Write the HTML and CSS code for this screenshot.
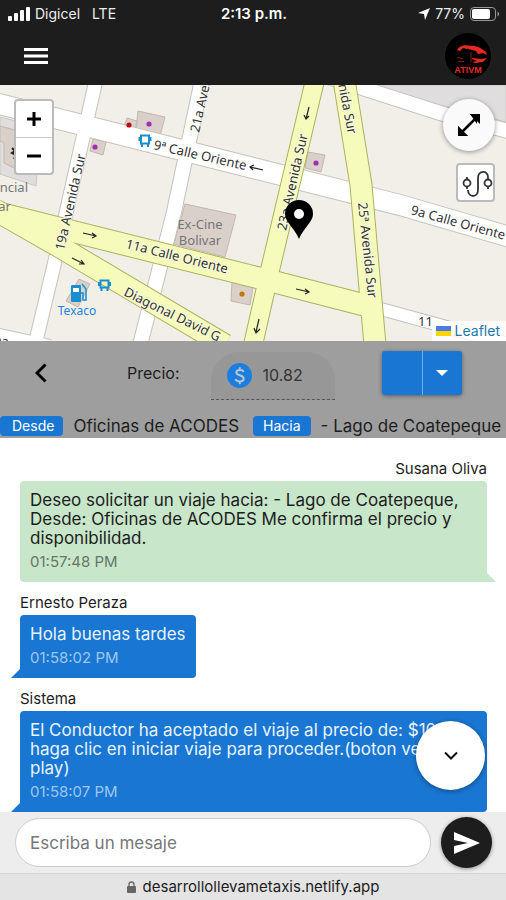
FILE: index.html
```html
<!DOCTYPE html>
<html lang="es">
<head>
<meta charset="utf-8">
<meta name="viewport" content="width=device-width, initial-scale=1">
<title>Lleva Me Taxis</title>
<link rel="stylesheet" href="styles.css">
</head>
<body>
<div class="app">
  <header class="header">
    <div class="status">
      <div class="status-side">
        <svg class="signal" viewBox="0 0 23 14" aria-hidden="true"><g fill="#fff"><rect x="0" y="9" width="4" height="5" rx="1"/><rect x="6" y="6" width="4" height="8" rx="1"/><rect x="12" y="3" width="4" height="11" rx="1"/><rect x="18" y="0" width="4" height="14" rx="1"/></g></svg>
        <span>Digicel</span><span class="network">LTE</span>
      </div>
      <strong class="clock">2:13 p.m.</strong>
      <div class="status-side status-end">
        <svg class="arrow" viewBox="0 0 12 12" aria-hidden="true"><path d="M12 0 7 12 6 6 0 5z" fill="#fff"/></svg>
        <span>77%</span>
        <svg class="battery" viewBox="0 0 30 14" aria-hidden="true"><rect x=".5" y=".5" width="25" height="13" rx="3.5" fill="none" stroke="#999"/><rect x="2" y="2" width="18" height="10" rx="2" fill="#fff"/><path d="M27.500 4.500c2 .8 2 4.200 0 5z" fill="#999"/></svg>
      </div>
    </div>
    <div class="toolbar">
      <button class="menu" aria-label="Menú"><svg viewBox="0 0 24 18" aria-hidden="true"><path d="M0 2.500h24M0 9h24M0 15.500h24" stroke="#fff" stroke-width="3"/></svg></button>
      <svg class="logo" viewBox="0 0 46 46" role="img" aria-label="ATIVM"><circle cx="23" cy="23" r="23" fill="#000"/><g fill="#e52a23"><path d="M12 17c2-4 8-6 14-4l-4 3-4-1-3 3z"/><path d="M24 13c7-1 12 2 17 6l1 3-4-2-5 1-2-3-8-2z"/><path d="M27 25l9 1 6-1-4 4-8 1-3-1 5-1-5-2z"/><path d="M12 24l6 1v1l-6-1zM13 28h6v1h-6z" opacity=".6"/><path d="M26 19v10" stroke="#8e1612" stroke-width="1"/></g><text x="23" y="40" text-anchor="middle" class="logo-text">ATIVM</text></svg>
    </div>
  </header>

  <section class="map" aria-label="Mapa">
    <svg class="map-canvas" viewBox="0 85 506 256" preserveAspectRatio="xMidYMid slice">
      <rect y="85" width="506" height="256" fill="#f2efe9"/>
      <g fill="#dfdddd" stroke="#ccc8c4">
        <path d="M374 85H506V122L440 105z"/>
        <path d="M0 117 40 127 36 186 0 174z"/>
      </g>
      <g fill="#d9d0c9" stroke="#c4b7ad">
        <path d="M0 126 18 131 14 168 4 163 4 143 0 141z"/>
        <path d="M138 111 165 117 160 136 136 131z"/><path d="M127 118 137 121 135 130 124 127z"/>
        <path d="M93 139 106 142 103 155 90 151z"/><path d="M308 152 325 155 321 172 305 168z"/>
        <path d="M185 204 236 215 225 257 174 244z"/><path d="M232 282 253 287 250 305 231 301z"/>
        <path d="M79 279 90 284 78 307 66 301z"/>
      </g>
      <g fill="none" stroke="#c6c3be">
        <path d="M96 80 60 240 35 345" stroke-width="15"/><path d="M202 80 174 212 140 345" stroke-width="16"/>
        <path d="M-5 103 253 168 400 205 510 237" stroke-width="22"/><path d="M325 76 440 113 512 132" stroke-width="16"/>
        <path d="M370 306 512 345" stroke-width="14"/><path d="M-5 336 50 348" stroke-width="18"/>
      </g>
      <g fill="none" stroke="#fff">
        <path d="M96 80 60 240 35 345" stroke-width="13"/><path d="M202 80 174 212 140 345" stroke-width="14"/>
        <path d="M-5 103 253 168 400 205 510 237" stroke-width="20"/><path d="M325 76 440 113 512 132" stroke-width="14"/>
        <path d="M370 306 512 345" stroke-width="12"/><path d="M-5 336 50 348" stroke-width="16"/>
      </g>
      <g fill="none" stroke="#acb35c">
        <path d="M315 80 270 270 253 345" stroke-width="20"/><path d="M344 80 361 185 371 300 375 345" stroke-width="23"/>
        <path d="M-5 212 275 282 372 307" stroke-width="23"/><path d="M-5 210 60 247 225 345" stroke-width="23"/>
      </g>
      <g fill="none" stroke="#f6fabb">
        <path d="M315 80 270 270 253 345" stroke-width="18"/><path d="M344 80 361 185 371 300 375 345" stroke-width="21"/>
        <path d="M-5 212 275 282 372 307" stroke-width="21"/><path d="M-5 210 60 247 225 345" stroke-width="21"/>
      </g>
      <g fill="#a32cb5"><circle cx="149" cy="124" r="2.600"/><circle cx="95" cy="147" r="2.600"/><circle cx="316" cy="163" r="2.600"/></g>
      <circle cx="129" cy="125" r="2.600" fill="#c40a10"/><circle cx="242" cy="294" r="2.600" fill="#c77400"/>
      <path d="M12 148l3 3-3 2 4 2-2 4" fill="none" stroke="#222" stroke-width="2"/>
      <g fill="none" stroke="#222" stroke-width="1.200">
        <path d="M263 170 250 167M254 165l-4 2 3 3"/><path d="M83 233l13 3M92 233l4 3-4 2"/><path d="M72 258l12 6M81 260l3 4-5 0"/>
        <path d="M296 289l13 3M305 289l4 3-4 2"/><path d="M259 319l-3 13M254 328l2 5 4-4"/><path d="M309 107l-3 12M304 115l2 4 3-3"/>
      </g>
      <g fill="none" stroke="#168fd1" stroke-width="2"><rect x="141" y="135.500" width="8" height="8"/><path d="M139.500 137v4M150.500 137v4M142 144v3M148 144v3"/></g>
      <g fill="none" stroke="#168fd1" stroke-width="2"><rect x="100.500" y="280.500" width="8" height="7"/><path d="M99 282v4M110 282v4M101.500 288v3M107.500 288v3"/></g>
      <g fill="#168fd1"><rect x="71" y="285" width="10" height="17" rx="1"/><path d="M82 284l4 5v11h-3v-7h-2" fill="none" stroke="#168fd1" stroke-width="1.500"/><rect x="73" y="288" width="6" height="4" fill="#fff"/></g>
      <defs>
        <path id="r9" d="M153 149 262 174"/><path id="r9b" d="M410 214 530 247"/><path id="r11" d="M125 248 245 278"/>
        <path id="r19" d="M64 251 89 140"/><path id="r21" d="M199 133 217 55"/><path id="r23" d="M286 231 311 120"/>
        <path id="r25" d="M358 203 370 315"/><path id="r25b" d="M334 63 350 145"/><path id="rd" d="M123 295 257 361"/>
      </defs>
      <g class="street">
        <text><textPath href="#r9">9ª Calle Oriente</textPath></text><text><textPath href="#r9b">9a Calle Oriente</textPath></text>
        <text><textPath href="#r11">11a Calle Oriente</textPath></text><text><textPath href="#r19">19a Avenida Sur</textPath></text>
        <text><textPath href="#r21">21a Avenida</textPath></text><text><textPath href="#r23">23a Avenida Sur</textPath></text>
        <text><textPath href="#r25">25ª Avenida Sur</textPath></text><text><textPath href="#r25b">Avenida Sur</textPath></text>
        <text><textPath href="#rd">Diagonal David G</textPath></text>
        <text x="418" y="326">11</text><text x="-6" y="346">9a</text>
      </g>
      <g class="place"><text x="200" y="229" text-anchor="middle">Ex-Cine</text><text x="200" y="245" text-anchor="middle">Bolivar</text><text x="28" y="192" text-anchor="end">ncial</text><text x="11" y="211" text-anchor="end">ar</text></g>
      <text x="77" y="315" text-anchor="middle" class="brand">Texaco</text>
      <path d="M299 239C294 227 285 222 285 214a14 14 0 0 1 28 0c0 8-9 13-14 25z"/><circle cx="299" cy="214" r="5" fill="#fff"/>
    </svg>
    <div class="zoom"><button aria-label="Acercar"><svg viewBox="0 0 16 16"><path d="M8 1v14M1 8h14"/></svg></button><button aria-label="Alejar"><svg viewBox="0 0 16 16"><path d="M1 8h14"/></svg></button></div>
    <div class="map-tools">
      <button class="expand" aria-label="Ampliar mapa"><svg viewBox="0 0 24 24"><path d="M5 19 19 5" stroke="#000" stroke-width="2.500"/><path d="M13 1h10L20 4v7zM1 13v10h10z"/><path d="M13 1h10v10zM1 13v10h10z"/></svg></button>
      <button class="route" aria-label="Ruta"><svg viewBox="2 2 35 35" fill="none" stroke="#333" stroke-width="1.800"><circle cx="11" cy="20" r="3.500"/><circle cx="32" cy="20" r="3.500"/><path d="M11 14v3M11 23v3M32 14v3M32 23v3"/><path d="M12 27c0 8 10 8 10 0V15c0-8 10-8 10-1"/></svg></button>
    </div>
    <a class="leaflet" href="#leaflet"><svg viewBox="0 0 15 10" aria-hidden="true"><path fill="#4c7be1" d="M0 0h15v5H0z"/><path fill="#ffd500" d="M0 5h15v5H0z"/></svg>Leaflet</a>
  </section>

  <section class="trip">
    <div class="trip-controls">
      <button class="back" aria-label="Volver"><svg viewBox="0 0 12 20"><path d="M10.500 1.500 2 10l8.500 8.500" fill="none" stroke="#000" stroke-width="3"/></svg></button>
      <label class="price-label" for="price">Precio:</label>
      <div class="price-field">
        <svg viewBox="0 0 24 24" aria-hidden="true"><circle cx="12" cy="12" r="12" fill="#1c7fe0"/><path d="M16 8.500C15 6 9 6 9 9c0 3.500 7 2 7 6 0 3.500-7 3.500-8 .3M12.300 4v3M12.300 17.500v3" fill="none" stroke="#bcc6cf" stroke-width="1.800"/></svg>
        <input id="price" value="10.82" readonly>
      </div>
      <div class="split"><button aria-label="Iniciar viaje"></button><button aria-label="Más opciones"><svg viewBox="0 0 12 6"><path d="M0 0h12L6 6z" fill="#fff"/></svg></button></div>
    </div>
    <div class="places"><span class="tag tag-from">Desde</span><span class="from">Oficinas de ACODES</span><span class="tag">Hacia</span><span>- Lago de Coatepeque</span></div>
  </section>

  <main class="chat">
    <article class="message sent"><h2>Susana Oliva</h2><div class="bubble"><p>Deseo solicitar un viaje hacia: - Lago de Coatepeque, Desde: Oficinas de ACODES Me confirma el precio y disponibilidad.</p><time>01:57:48 PM</time></div></article>
    <article class="message"><h2>Ernesto Peraza</h2><div class="bubble"><p>Hola buenas tardes</p><time>01:58:02 PM</time></div></article>
    <article class="message"><h2>Sistema</h2><div class="bubble"><p>El Conductor ha aceptado el viaje al precio de: $10.82 haga clic en iniciar viaje para proceder.(boton verde play)</p><time>01:58:07 PM</time></div></article>
    <button class="scroll-down" aria-label="Bajar"><svg viewBox="0 0 14 9"><path d="M1 1.500 7 7.500 13 1.500" fill="none" stroke="#111" stroke-width="2"/></svg></button>
  </main>

  <form class="composer">
    <input type="text" aria-label="Mensaje" placeholder="Escriba un mesaje">
    <button type="button" aria-label="Enviar"><svg viewBox="0 0 28 24"><path d="M1 1 27 12 1 23V15L15 12 1 9z" fill="#fff"/></svg></button>
  </form>
  <footer class="address"><svg viewBox="0 0 9 12" aria-hidden="true"><rect y="5" width="9" height="7" rx="1" fill="#666"/><path d="M2 6V3.500a2.500 2.500 0 0 1 5 0V6" fill="none" stroke="#666" stroke-width="1.300"/></svg>desarrollollevametaxis.netlify.app</footer>
</div>
</body>
</html>
```
FILE: styles.css
```css
* { box-sizing: border-box; }
body { margin: 0; font: 17px/20px Inter, "Liberation Sans", sans-serif; color: #1d1d1d; background: #fff; }
button { display: flex; align-items: center; justify-content: center; padding: 0; border: 0; background: none; color: inherit; cursor: pointer; }
svg { display: block; flex: none; }
h2, p { margin: 0; font-weight: 400; }
.app { display: flex; flex-direction: column; min-height: 100vh; }

.header { height: 85px; background: #1d1d1d; color: #eee; }
.status { display: flex; align-items: center; height: 28px; padding: 0 6px 0 8px; font-size: 14px; }
.status-side { display: flex; flex: 1; align-items: center; gap: 4px; }
.status-end { justify-content: flex-end; gap: 5px; }
.network { margin-left: 8px; }
.signal { width: 23px; height: 14px; }
.arrow { width: 12px; height: 12px; }
.battery { width: 30px; height: 14px; }
.clock { font-size: 15px; font-weight: 600; color: #fff; }
.toolbar { display: flex; align-items: center; justify-content: space-between; height: 56px; padding: 0 15px 0 24px; }
.menu svg { width: 24px; height: 18px; }
.logo { width: 46px; height: 46px; }
.logo-text { font: 700 9px "Liberation Sans", sans-serif; fill: #e52a23; }

.map { position: relative; height: 256px; overflow: hidden; }
.map-canvas { width: 100%; height: 100%; }
.street { font: 13px "Noto Sans", sans-serif; fill: #333; stroke: #fff; stroke-opacity: .5; stroke-width: 2px; paint-order: stroke; }
.place { font: 13px "Noto Sans", sans-serif; fill: #777; }
.brand { font: 12px "Noto Sans", sans-serif; fill: #1b85e8; }
.zoom { position: absolute; top: 14px; left: 14px; width: 40px; border: 2px solid #bbb; border-radius: 4px; background: #fff; }
.zoom button { width: 100%; height: 36px; }
.zoom button + button { border-top: 1px solid #ccc; }
.zoom svg { width: 16px; height: 16px; stroke: #000; stroke-width: 3px; }
.map-tools { position: absolute; top: 14px; right: 11px; display: flex; flex-direction: column; align-items: flex-end; gap: 12px; }
.expand { width: 52px; height: 52px; border-radius: 50%; background: #fafafa; box-shadow: 0 1px 5px #0006; }
.expand svg { width: 24px; height: 24px; }
.route { width: 39px; height: 39px; border: 2px solid #bbb; border-radius: 4px; background: #fff; }
.route svg { width: 35px; height: 35px; }
.leaflet { position: absolute; right: 0; bottom: 0; display: flex; align-items: center; gap: 4px; padding: 0 6px 0 4px; background: #fffc; color: #2279a8; font-size: 14px; text-decoration: none; }
.leaflet svg { width: 15px; height: 10px; }

.trip { background: #9e9e9e; }
.trip-controls { display: flex; align-items: center; height: 73px; padding: 0 44px 10px 34px; font-size: 16px; }
.back { width: 14px; height: 24px; }
.back svg { width: 12px; height: 20px; }
.price-label { margin-left: 79px; }
.price-field { display: flex; align-items: center; gap: 11px; width: 124px; height: 48px; margin: 6px auto 0 31px; padding: 0 16px; border-bottom: 1px dashed #555; border-radius: 28px 28px 0 0; background: #979797; }
.price-field svg { width: 25px; height: 25px; }
.price-field input { width: 100%; min-width: 0; padding: 0; border: 0; outline: 0; background: none; color: #333; font: inherit; }
.split { display: flex; width: 80px; height: 44px; border-radius: 3px; background: #1976d2; box-shadow: 0 1px 4px #0006; }
.split button { flex: 1; }
.split button + button { border-left: 1px solid #6eaee9; }
.split svg { width: 12px; height: 6px; }
.places { display: flex; align-items: center; height: 24px; white-space: nowrap; }
.tag { padding: 0 10px; border-radius: 4px; background: #1976d2; color: #fff; font-size: 14px; margin-right: 10px; }
.tag-from { padding: 0 9px 0 12px; }
.from { margin-right: 14px; }

.chat { position: relative; flex: 1; padding: 21px 19px 0 20px; }
.message { display: flex; flex-direction: column; align-items: flex-start; margin-bottom: 11px; }
.message:last-of-type { margin-bottom: 0; }
.message h2 { font-size: 15px; line-height: 20px; margin-bottom: 2px; }
.sent h2 { align-self: flex-end; }
.bubble { position: relative; padding: 10px; border-radius: 4px 4px 4px 0; background: #1976d2; color: #e8f4ff; }
.bubble p { line-height: 19px; }
.bubble time { display: block; margin-top: 4px; color: #9fc6ee; font-size: 15px; }
.bubble::after { content: ""; position: absolute; right: 100%; bottom: 0; border: solid transparent; border-width: 0 0 9px 9px; border-bottom-color: #1976d2; }
.sent .bubble { border-radius: 4px 4px 0 4px; background: #c8e6c9; color: #1d1d1d; }
.sent time { color: #667768; }
.sent .bubble::after { right: auto; left: 100%; border-width: 0 9px 9px 0; border-bottom-color: #c8e6c9; }
.scroll-down { position: absolute; right: 21px; bottom: 22px; width: 69px; height: 69px; border-radius: 50%; background: #fff; box-shadow: 0 1px 5px #0006; }
.scroll-down svg { width: 14px; height: 9px; }

.composer { display: flex; align-items: center; gap: 10px; height: 61px; padding: 0 14px 0 15px; background: #ededed; }
.composer input { flex: 1; min-width: 0; height: 49px; padding: 0 14px; border: 1px solid #ccc; border-radius: 25px; background: #fff; font: inherit; }
.composer input::placeholder { color: #777; }
.composer button { width: 51px; height: 51px; border-radius: 50%; background: #1d1d1d; box-shadow: 0 1px 4px #0006; }
.composer svg { width: 28px; height: 24px; }
.address { display: flex; align-items: center; justify-content: center; gap: 7px; height: 27px; border-top: 1px solid #d4d4d4; background: #e4e4e4; font-size: 15px; }
.address svg { width: 9px; height: 12px; }
```
